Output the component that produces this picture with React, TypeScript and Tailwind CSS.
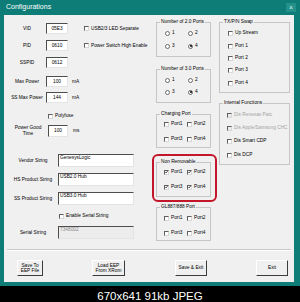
import React from "react";

const Check = ({
  label,
  checked = false,
  disabled = false,
}: {
  label: string;
  checked?: boolean;
  disabled?: boolean;
}) => (
  <div className="flex items-center h-[6px] whitespace-nowrap">
    <span
      className={`w-[5px] h-[5px] shrink-0 flex items-center justify-center border border-t-[#5f5f5f] border-l-[#5f5f5f] border-b-[#d8d8d8] border-r-[#d8d8d8] ${
        disabled ? "bg-[#ececec]" : "bg-white"
      }`}
    >
      {checked && (
        <svg viewBox="0 0 4 4" className="w-[4px] h-[4px]">
          <path d="M0.4 2 L1.5 3.2 L3.6 0.6" fill="none" stroke="#000" strokeWidth="0.9" />
        </svg>
      )}
    </span>
    <span className={`ml-[2px] ${disabled ? "text-[#a5a5a5]" : "text-black"}`}>{label}</span>
  </div>
);

const Radio = ({ label, checked = false }: { label: string; checked?: boolean }) => (
  <div className="flex items-center h-[6px]">
    <span className="w-[5px] h-[5px] shrink-0 rounded-full border border-[#6a6a6a] bg-white flex items-center justify-center">
      {checked && <span className="w-[2px] h-[2px] rounded-full bg-black" />}
    </span>
    <span className="ml-[2px]">{label}</span>
  </div>
);

const Field = ({
  value,
  className,
  disabled = false,
}: {
  value: string;
  className: string;
  disabled?: boolean;
}) => (
  <div
    className={`${className} border border-t-[#4d4d4d] border-l-[#4d4d4d] border-b-[#e4e4e4] border-r-[#e4e4e4] ${
      disabled ? "bg-[#ececec] text-[#8a8a8a]" : "bg-white text-black"
    }`}
  >
    {value}
  </div>
);

const GroupLabel = ({ text }: { text: string }) => (
  <div className="-mt-[4px] ml-[3px] px-[1px] h-[6px] w-fit bg-[#f0f0f0] whitespace-nowrap">{text}</div>
);

const Btn = ({ lines, className }: { lines: string[]; className: string }) => (
  <div
    className={`${className} h-[16px] flex flex-col items-center justify-center bg-[#f0f0f0] border border-t-white border-l-white border-b-[#3c3c3c] border-r-[#3c3c3c] leading-[5.5px]`}
  >
    {lines.map((l) => (
      <span key={l}>{l}</span>
    ))}
  </div>
);

export default function App() {
  return (
    <div className="w-[300px] h-[302px] bg-black overflow-hidden font-['Liberation_Sans',Arial,sans-serif]">
      <div className="h-[286px] bg-[#0f7d77] flex flex-col">
        {/* Title bar */}
        <div className="h-[15px] flex items-center justify-between pl-[6px] pr-[4px]">
          <span className="text-white text-[7px]">Configurations</span>
          <span className="w-[10px] h-[9px] bg-[#23918a] text-[#d6f0ee] text-[7px] leading-[9px] text-center">×</span>
        </div>

        {/* Client area */}
        <div className="ml-[4px] w-[290px] h-[267px] bg-[#f0f0f0] text-[4.8px] leading-[6px] text-black flex flex-col">
          <div className="h-[230px] flex items-start">
            {/* Left column */}
            <div className="w-[152px] pl-[4px] pt-[8px] flex flex-col">
              <div className="flex items-center h-[11px]">
                <span className="w-[38px] text-center">VID</span>
                <Field value="05E3" className="w-[22px] h-[11px] flex items-center justify-center" />
                <div className="ml-[16px]">
                  <Check label="USB2/3 LED Separate" />
                </div>
              </div>
              <div className="flex items-center h-[11px] mt-[6px]">
                <span className="w-[38px] text-center">PID</span>
                <Field value="0610" className="w-[22px] h-[11px] flex items-center justify-center" />
                <div className="ml-[16px]">
                  <Check label="Power Switch High Enable" />
                </div>
              </div>
              <div className="flex items-center h-[11px] mt-[6px]">
                <span className="w-[38px] text-center">SSPID</span>
                <Field value="0612" className="w-[22px] h-[11px] flex items-center justify-center" />
              </div>
              <div className="flex items-center h-[11px] mt-[8px]">
                <span className="w-[38px] text-center">Max Power</span>
                <Field value="100" className="w-[22px] h-[11px] flex items-center justify-center" />
                <span className="ml-[4px]">mA</span>
              </div>
              <div className="flex items-center h-[11px] mt-[5px]">
                <span className="w-[38px] text-center whitespace-nowrap">SS Max Power</span>
                <Field value="144" className="w-[22px] h-[11px] flex items-center justify-center" />
                <span className="ml-[4px]">mA</span>
              </div>
              <div className="mt-[10px] pl-[40px]">
                <Check label="Polyfuse" />
              </div>
              <div className="flex items-center h-[12px] mt-[6px]">
                <span className="w-[40px] text-center flex flex-col">
                  <span>Power Good</span>
                  <span>Time</span>
                </span>
                <Field value="100" className="w-[20px] h-[12px] flex items-center justify-center" />
                <span className="ml-[5px]">ms</span>
              </div>
              <div className="flex items-center h-[13px] mt-[17px]">
                <span className="w-[50px] text-center">Vendor String</span>
                <Field value="GenesysLogic" className="w-[76px] h-[13px] pl-[1px]" />
              </div>
              <div className="flex items-center h-[13px] mt-[6px]">
                <span className="w-[50px] text-center whitespace-nowrap">HS Product String</span>
                <Field value="USB2.0 Hub" className="w-[76px] h-[13px] pl-[1px]" />
              </div>
              <div className="flex items-center h-[13px] mt-[6px]">
                <span className="w-[50px] text-center whitespace-nowrap">SS Product String</span>
                <Field value="USB3.0 Hub" className="w-[76px] h-[13px] pl-[1px]" />
              </div>
              <div className="mt-[8px] pl-[51px]">
                <Check label="Enable Serial String" />
              </div>
              <div className="flex items-center h-[13px] mt-[7px]">
                <span className="w-[50px] text-center">Serial String</span>
                <Field value="7348002" disabled className="w-[76px] h-[13px] pl-[1px]" />
              </div>
            </div>

            {/* Middle column */}
            <div className="w-[55px] pt-[7px] flex flex-col">
              <div className="h-[35px] border border-[#c6c6c6]">
                <GroupLabel text="Number of 2.0 Ports" />
                <div className="flex mt-[5px] pl-[8px]">
                  <div className="w-[23px]"><Radio label="1" /></div>
                  <Radio label="2" />
                </div>
                <div className="flex mt-[7px] pl-[8px]">
                  <div className="w-[23px]"><Radio label="3" /></div>
                  <Radio label="4" checked />
                </div>
              </div>

              <div className="h-[34px] mt-[12px] border border-[#c6c6c6]">
                <GroupLabel text="Number of 3.0 Ports" />
                <div className="flex mt-[5px] pl-[8px]">
                  <div className="w-[23px]"><Radio label="1" /></div>
                  <Radio label="2" />
                </div>
                <div className="flex mt-[6px] pl-[8px]">
                  <div className="w-[23px]"><Radio label="3" /></div>
                  <Radio label="4" checked />
                </div>
              </div>

              <div className="h-[34px] mt-[11px] border border-[#c6c6c6]">
                <GroupLabel text="Charging Port" />
                <div className="flex mt-[4px] pl-[7px]">
                  <div className="w-[23px]"><Check label="Port1" /></div>
                  <Check label="Port2" />
                </div>
                <div className="flex mt-[9px] pl-[7px]">
                  <div className="w-[23px]"><Check label="Port3" /></div>
                  <Check label="Port4" />
                </div>
              </div>

              {/* highlighted group */}
              <div className="mt-[6px] -ml-[4px] w-[65px] border-2 border-[#c3162b] rounded-[6px] pl-[2px] pt-[6px] pb-[3px]">
                <div className="w-[55px] h-[35px] border border-[#c6c6c6]">
                  <GroupLabel text="Non Removable" />
                  <div className="flex mt-[4px] pl-[7px]">
                    <div className="w-[23px]"><Check label="Port1" checked /></div>
                    <Check label="Port2" checked />
                  </div>
                  <div className="flex mt-[9px] pl-[7px]">
                    <div className="w-[23px]"><Check label="Port3" checked /></div>
                    <Check label="Port4" checked />
                  </div>
                </div>
              </div>

              <div className="h-[34px] mt-[5px] border border-[#c6c6c6]">
                <GroupLabel text="GL887/888 Port" />
                <div className="flex mt-[5px] pl-[7px]">
                  <div className="w-[23px]"><Check label="Port1" /></div>
                  <Check label="Port2" />
                </div>
                <div className="flex mt-[9px] pl-[7px]">
                  <div className="w-[23px]"><Check label="Port3" /></div>
                  <Check label="Port4" />
                </div>
              </div>
            </div>

            {/* Right column */}
            <div className="ml-[8px] w-[71px] pt-[7px] flex flex-col">
              <div className="h-[71px] border border-[#c6c6c6] pl-[8px]">
                <div className="-ml-[8px]">
                  <GroupLabel text="TX/P/N Swap" />
                </div>
                <div className="mt-[5px]"><Check label="Up Stream" /></div>
                <div className="mt-[7px]"><Check label="Port 1" /></div>
                <div className="mt-[6px]"><Check label="Port 2" /></div>
                <div className="mt-[6px]"><Check label="Port 3" /></div>
                <div className="mt-[7px]"><Check label="Port 4" /></div>
              </div>
              <div className="h-[62px] mt-[10px] border border-[#c6c6c6] pl-[7px]">
                <div className="-ml-[7px]">
                  <GroupLabel text="Internal Functions" />
                </div>
                <div className="mt-[6px]"><Check label="Dis Renesas Patc" disabled /></div>
                <div className="mt-[7px]"><Check label="Dis Apple/Samsung CHC" disabled /></div>
                <div className="mt-[7px]"><Check label="Dis Smart CDP" /></div>
                <div className="mt-[8px]"><Check label="Dis DCP" /></div>
              </div>
            </div>
          </div>

          {/* Separator */}
          <div className="mt-[4px] mx-[3px] h-[2px] border-t border-[#c9c9c9] border-b border-b-white" />

          {/* Buttons */}
          <div className="mt-[9px] flex">
            <Btn lines={["Save To", "EEP File"]} className="ml-[13px] w-[26px]" />
            <Btn lines={["Load EEP", "From XRom"]} className="ml-[49px] w-[33px]" />
            <Btn lines={["Save & Exit"]} className="ml-[50px] w-[32px]" />
            <Btn lines={["Exit"]} className="ml-[49px] w-[32px]" />
          </div>
        </div>
      </div>

      <div className="h-[16px] pt-[3px] text-white text-[11.5px] leading-[14px] text-center">670x641 91kb JPEG</div>
    </div>
  );
}
